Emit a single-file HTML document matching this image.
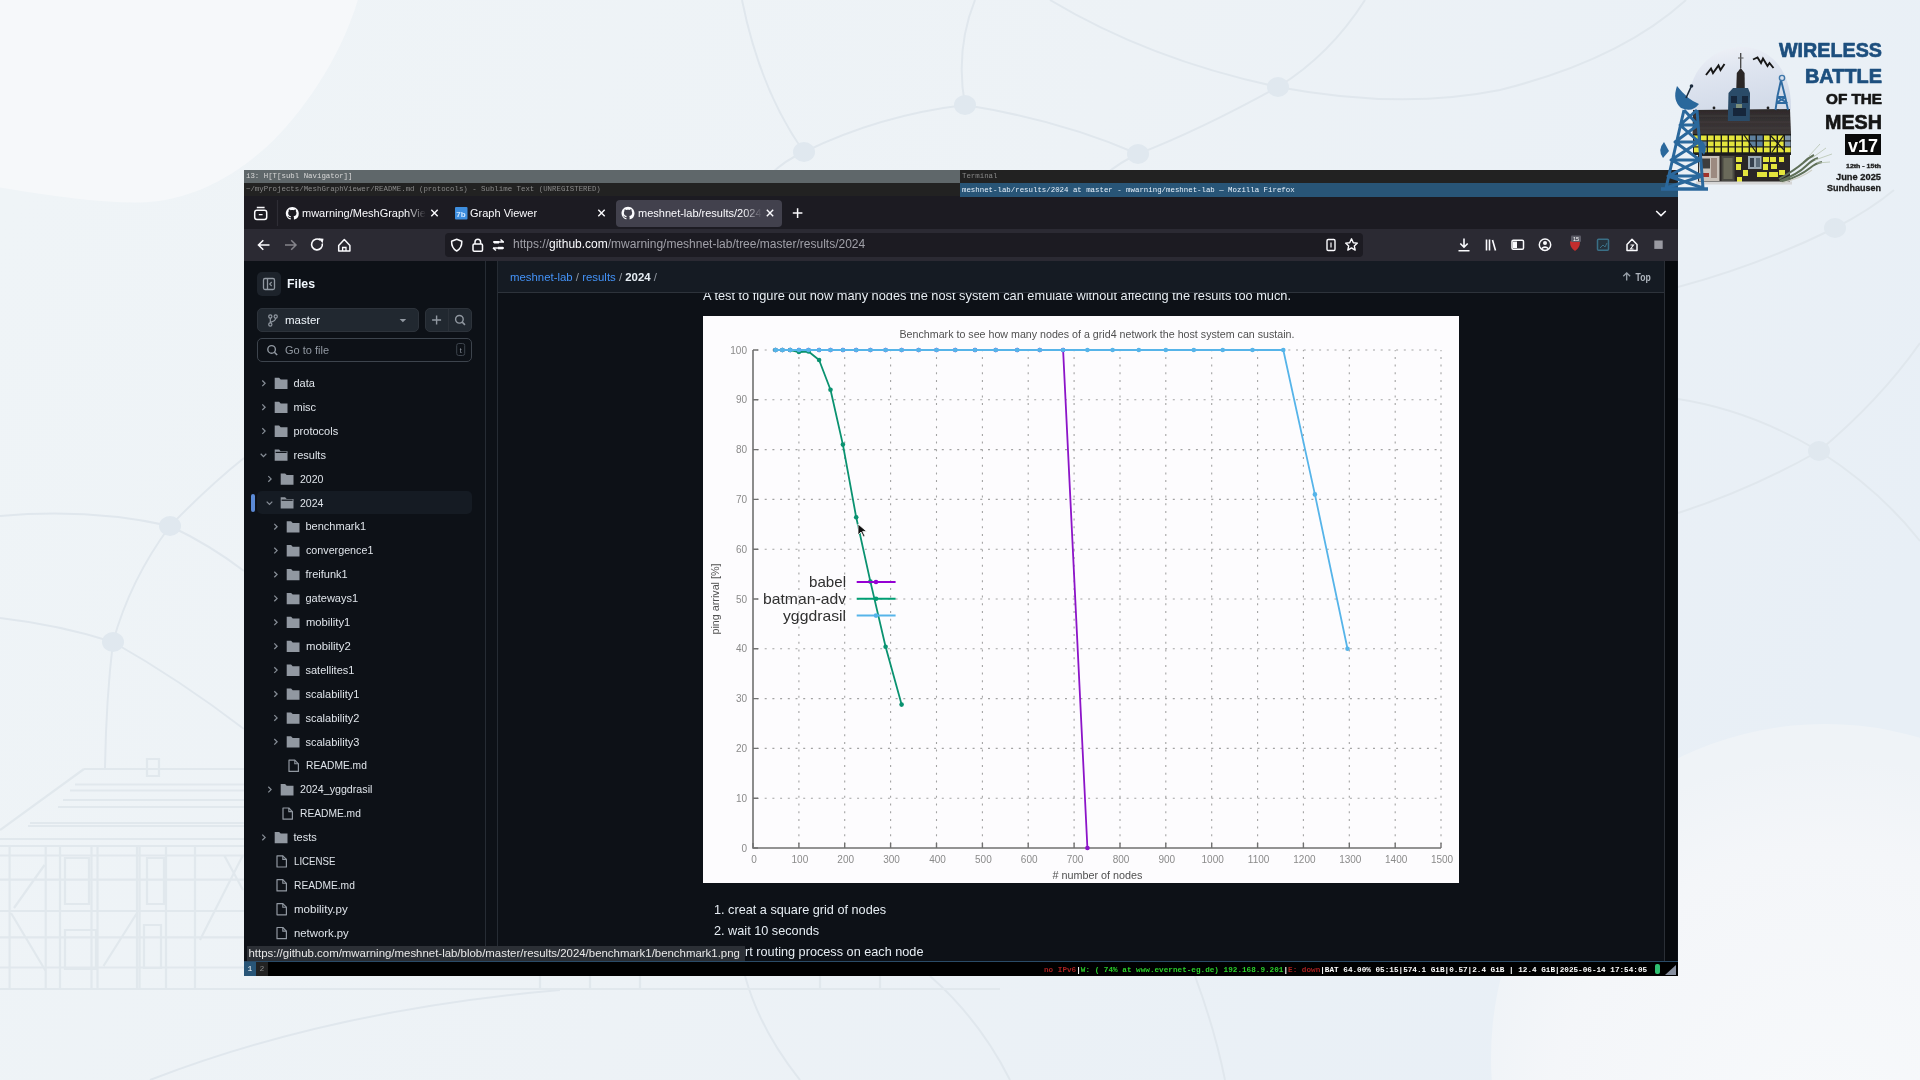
<!DOCTYPE html><html><head><meta charset="utf-8"><title>meshnet-lab</title><style>
*{margin:0;padding:0;box-sizing:border-box}
html,body{width:1920px;height:1080px;overflow:hidden}
body{position:relative;font-family:"Liberation Sans",sans-serif;background:#edf2f6}
.a{position:absolute}
.mono{font-family:"Liberation Mono",monospace}
.t{white-space:nowrap}
</style></head><body><div style="position:absolute;left:0;top:0;width:1920px;height:1080px;overflow:hidden;filter:blur(0.5px)"><svg width="1920" height="1080" viewBox="0 0 1920 1080" style="position:absolute;left:0;top:0"><defs><linearGradient id="bgg" x1="0" y1="0.2" x2="1" y2="0.5"><stop offset="0" stop-color="#eff4f7"/><stop offset="0.5" stop-color="#edf2f6"/><stop offset="1" stop-color="#e8eff6"/></linearGradient></defs><rect width="1920" height="1080" fill="url(#bgg)"/><path d="M0 187.5 C50 196 100 203 140 202.5 C190 201 232 178 266.7 146.7 C300 116 340 60 357.8 0 L0 0 Z" fill="#f6f8fa"/><radialGradient id="brc" cx="0.5" cy="0.6" r="0.55"><stop offset="0" stop-color="#f7f9fb"/><stop offset="0.75" stop-color="#f4f6f9"/><stop offset="1" stop-color="#eff3f7"/></radialGradient><circle cx="1825" cy="1058" r="334" fill="url(#brc)"/><path d="M742 0 Q760 90 804 152 M804 152 Q785 160 770 175 M975 0 Q955 50 965 105 M804 152 Q880 115 965 105 M965 105 Q1060 120 1138 154 M1138 154 Q1120 162 1105 175 M1050 0 Q1150 60 1278 87 M1365 0 Q1330 55 1278 87 M1278 87 Q1400 110 1500 90 Q1620 60 1686 0 M1278 87 Q1200 130 1138 154 M0 516 Q90 508 170 526 M170 526 Q210 485 244 458 M170 526 Q210 545 244 571 M170 526 Q130 580 113 642 M0 618 Q60 625 113 642 M113 642 Q180 680 244 729 M113 642 Q106 700 105 769 M1678 287 Q1760 265 1835 228 Q1870 210 1894 190 M1678 399 Q1750 410 1819 451 M1819 451 Q1750 490 1678 513 M1819 451 Q1880 400 1920 343 M1819 451 Q1880 490 1920 541 M150 1080 Q330 1010 560 990 M745 976 Q760 1030 800 1080 M930 976 Q980 1020 1010 1080 M1195 976 Q1215 1030 1225 1080" stroke="#e0e7ed" stroke-width="2" fill="none"/><ellipse cx="965" cy="105" rx="11" ry="10" fill="#e0e8ef"/><ellipse cx="1278" cy="87" rx="11" ry="10" fill="#e0e8ef"/><ellipse cx="804" cy="152" rx="11" ry="10" fill="#e0e8ef"/><ellipse cx="1138" cy="154" rx="11" ry="10" fill="#e0e8ef"/><ellipse cx="170" cy="526" rx="11" ry="10" fill="#e0e8ef"/><ellipse cx="113" cy="642" rx="11" ry="10" fill="#e0e8ef"/><ellipse cx="1835" cy="228" rx="11" ry="10" fill="#e0e8ef"/><ellipse cx="1819" cy="451" rx="11" ry="10" fill="#e0e8ef"/><path d="M84 769 H560 M84 769 L0 830 M75 784.5 H560 M70 790.5 H560 M63 800 H560 M58 807 H560 M30 823 H560 M28 826 H560 M0 839 H560 M0 846 H560 M0 855.5 H560 M0 879.6 H560 M0 911 H560 M0 937.4 H560 M0 967.5 H560 M0 989 H1000 M9.6 846 V989 M45.7 846 V989 M60 846 V989 M91.5 846 V989 M97.5 846 V989 M137 846 V989 M139.6 846 V989 M166 846 V989 M195 846 V989 M14 908 L44.5 865 M11 913 L45.7 971 M103.5 966 L137 913 M200 940 L243 855 M224 855 L243 890 M65 858 H89 V904 H65 Z M147 858 H164 V904 H147 Z M65 930 H96 V969 H65 Z M144 925 H161 V968 H144 Z M147 759 H159 V776 H147 Z M540 976 V989 M590 976 V989 M640 976 V989 M820 976 V989 M880 976 V989" stroke="#e1e8ed" stroke-width="2.2" fill="none"/></svg><div class="a" style="left:244px;top:170px;width:1434px;height:806px;background:#0d1117"></div><div class="a" style="left:244px;top:196px;width:1434px;height:33px;background:#1c1b22"></div><div class="a mono t" id="i3a" style="left:244px;top:170px;width:716px;height:13px;background:#5f676a;color:#d8d8d8;font-size:7.4px;line-height:13px;padding-left:2px">i3: H[T[subl Navigator]]</div><div class="a mono t" style="left:960px;top:170px;width:718px;height:13px;background:#222;color:#888;font-size:7.4px;line-height:13px;padding-left:2px">Terminal</div><div class="a mono t" id="i3b" style="left:244px;top:183px;width:716px;height:13px;background:#222;color:#8a8a8a;font-size:7.4px;line-height:13px;padding-left:2px">~/myProjects/MeshGraphViewer/README.md (protocols) - Sublime Text (UNREGISTERED)</div><div class="a mono t" id="i3c" style="left:960px;top:183px;width:718px;height:14px;background:#285577;color:#e8f2fc;font-size:7.4px;line-height:14px;padding-left:2px">meshnet-lab/results/2024 at master - mwarning/meshnet-lab — Mozilla Firefox</div><div class="a" style="left:616px;top:200px;width:166px;height:27px;background:#42414d;border-radius:4px"></div><div class="a t" id="tab2" style="left:470px;top:206px;font-size:11px;line-height:14px;color:#fbfbfe">Graph Viewer</div><div class="a t" id="tab1" style="left:302px;top:206px;width:124px;overflow:hidden;font-size:11px;line-height:14px;color:#fbfbfe;-webkit-mask-image:linear-gradient(90deg,#000 85%,transparent)">mwarning/MeshGraphViewer</div><div class="a t" id="tab3" style="left:638px;top:206px;width:124px;overflow:hidden;font-size:11px;line-height:14px;color:#fbfbfe;-webkit-mask-image:linear-gradient(90deg,#000 85%,transparent)">meshnet-lab/results/2024</div><div class="a" style="left:244px;top:229px;width:1434px;height:32px;background:#2b2a33"></div><div class="a" style="left:445px;top:233px;width:918px;height:24px;background:#1c1b22;border-radius:4px"></div><div class="a t" id="url" style="left:513px;top:237px;font-size:12px;line-height:15px;color:#a0a0a8">https://<span style="color:#fbfbfe">github.com</span>/mwarning/meshnet-lab/tree/master/results/2024</div><svg width="1920" height="270" viewBox="0 0 1920 270" style="position:absolute;left:0;top:0"><rect x="254.7" y="210.2" width="12" height="9.3" rx="2.2" stroke="#fbfbfe" stroke-width="1.5" fill="none"/><path d="M256.8 207.5 h7.8 M258.8 214.6 h3.8" stroke="#fbfbfe" stroke-width="1.4"/><path d="M277.5 200 V226" stroke="#2e2d35" stroke-width="1.2"/><path transform="translate(285.80 206.90) scale(0.8125)" d="M8 0C3.58 0 0 3.58 0 8c0 3.54 2.29 6.53 5.47 7.59.4.07.55-.17.55-.38 0-.19-.01-.82-.01-1.49-2.01.37-2.53-.49-2.69-.94-.09-.23-.48-.94-.82-1.13-.28-.15-.68-.52-.01-.53.63-.01 1.08.58 1.23.82.72 1.21 1.87.87 2.33.66.07-.52.28-.87.51-1.07-1.78-.2-3.64-.89-3.64-3.95 0-.87.31-1.59.82-2.15-.08-.2-.36-1.02.08-2.12 0 0 .67-.21 2.2.82.64-.18 1.32-.27 2-.27.68 0 1.36.09 2 .27 1.53-1.04 2.2-.82 2.2-.82.44 1.1.16 1.92.08 2.12.51.56.82 1.27.82 2.15 0 3.07-1.87 3.75-3.65 3.95.29.25.54.73.54 1.48 0 1.07-.01 1.93-.01 2.2 0 .21.15.46.55.38A8.013 8.013 0 0016 8c0-4.42-3.58-8-8-8z" fill="#fbfbfe"/><path transform="translate(621.50 206.70) scale(0.8125)" d="M8 0C3.58 0 0 3.58 0 8c0 3.54 2.29 6.53 5.47 7.59.4.07.55-.17.55-.38 0-.19-.01-.82-.01-1.49-2.01.37-2.53-.49-2.69-.94-.09-.23-.48-.94-.82-1.13-.28-.15-.68-.52-.01-.53.63-.01 1.08.58 1.23.82.72 1.21 1.87.87 2.33.66.07-.52.28-.87.51-1.07-1.78-.2-3.64-.89-3.64-3.95 0-.87.31-1.59.82-2.15-.08-.2-.36-1.02.08-2.12 0 0 .67-.21 2.2.82.64-.18 1.32-.27 2-.27.68 0 1.36.09 2 .27 1.53-1.04 2.2-.82 2.2-.82.44 1.1.16 1.92.08 2.12.51.56.82 1.27.82 2.15 0 3.07-1.87 3.75-3.65 3.95.29.25.54.73.54 1.48 0 1.07-.01 1.93-.01 2.2 0 .21.15.46.55.38A8.013 8.013 0 0016 8c0-4.42-3.58-8-8-8z" fill="#fbfbfe"/><rect x="455" y="207" width="12.5" height="12.5" rx="1" fill="#3e8ede"/><text x="461" y="217" font-family="Liberation Sans, sans-serif" font-size="8" font-weight="bold" fill="#cfe6ff" text-anchor="middle">7b</text><path d="M431.3 209.8 l6.4 6.4 M437.7 209.8 l-6.4 6.4" stroke="#fbfbfe" stroke-width="1.4"/><path d="M598.3 209.8 l6.4 6.4 M604.7 209.8 l-6.4 6.4" stroke="#fbfbfe" stroke-width="1.4"/><path d="M766.8 209.8 l6.4 6.4 M773.2 209.8 l-6.4 6.4" stroke="#fbfbfe" stroke-width="1.4"/><path d="M797.6 208.3 v9.6 M792.8 213.1 h9.6" stroke="#fbfbfe" stroke-width="1.5"/><path d="M1656.2 211 l4.8 4.6 l4.8 -4.6" stroke="#fbfbfe" stroke-width="1.5" fill="none"/><path d="M269.5 245 H258.5 M263.3 240.2 L258.5 245 L263.3 249.8" stroke="#fbfbfe" stroke-width="1.6" fill="none"/><path d="M285 245 H296 M291.2 240.2 L296 245 L291.2 249.8" stroke="#85848b" stroke-width="1.5" fill="none"/><path d="M322.3 243.5 A5.4 5.4 0 1 1 320.3 240.2" stroke="#fbfbfe" stroke-width="1.6" fill="none"/><path d="M318.5 238.2 L323.5 238.8 L322.6 243.2 Z" fill="#fbfbfe"/><path d="M338.7 245.5 L344.3 239.5 L349.9 245.5 V251 H338.7 Z" stroke="#fbfbfe" stroke-width="1.5" fill="none" stroke-linejoin="round"/><path d="M342.6 251 v-3.5 h3.4 v3.5" stroke="#fbfbfe" stroke-width="1.3" fill="none"/><path d="M456.7 239.3 L461.8 241.2 Q462 248 456.7 251 Q451.4 248 451.6 241.2 Z" stroke="#fbfbfe" stroke-width="1.5" fill="none" stroke-linejoin="round"/><rect x="473" y="244" width="9.5" height="7.2" rx="1.2" stroke="#fbfbfe" stroke-width="1.5" fill="none"/><path d="M475 244 v-2 a2.8 2.8 0 0 1 5.6 0 v2" stroke="#fbfbfe" stroke-width="1.5" fill="none"/><path d="M493 242 h11 M500.5 239.5 l3 2.5 M493 248 h11 M496 250.5 l-3 -2.5" stroke="#fbfbfe" stroke-width="1.5" fill="none"/><rect x="494" y="241" width="5" height="2.5" fill="#fbfbfe"/><rect x="498" y="246.8" width="5" height="2.5" fill="#fbfbfe"/><rect x="1327" y="239.5" width="8" height="11" rx="1.2" stroke="#fbfbfe" stroke-width="1.4" fill="none"/><path d="M1331 242.5 v5" stroke="#fbfbfe" stroke-width="1.2"/><path d="M1351.5 238.8 L1353.3 242.7 L1357.4 243.1 L1354.3 245.9 L1355.2 250.1 L1351.5 247.9 L1347.8 250.1 L1348.7 245.9 L1345.6 243.1 L1349.7 242.7 Z" stroke="#fbfbfe" stroke-width="1.4" fill="none" stroke-linejoin="round"/><path d="M1464 238.5 V247 M1460.3 243.5 L1464 247.2 L1467.7 243.5 M1458.5 250.8 H1469.5" stroke="#fbfbfe" stroke-width="1.6" fill="none"/><path d="M1486.5 239.5 V250.5 M1489.5 239.5 V250.5 M1492.5 240 L1495.5 250.5" stroke="#fbfbfe" stroke-width="1.6" fill="none"/><rect x="1512" y="240.2" width="11.5" height="9" rx="1.3" stroke="#fbfbfe" stroke-width="1.5" fill="none"/><rect x="1513" y="241.5" width="4" height="6.5" fill="#fbfbfe"/><circle cx="1545" cy="244.8" r="5.7" stroke="#fbfbfe" stroke-width="1.5" fill="none"/><circle cx="1545" cy="243" r="2" fill="#fbfbfe"/><path d="M1541.5 248.7 Q1545 245.5 1548.5 248.7" stroke="#fbfbfe" stroke-width="1.5" fill="none"/><path d="M1570 241.5 L1575 239.5 L1580 241.5 Q1580 248 1575 251 Q1570 248 1570 241.5 Z" fill="#c22d2d"/><rect x="1571" y="235.5" width="10" height="6.5" rx="1" fill="#5b5b66"/><text x="1576" y="241" font-family="Liberation Sans, sans-serif" font-size="5.5" fill="#fff" text-anchor="middle">15</text><rect x="1597.5" y="239.3" width="11" height="11" rx="1" stroke="#3a6f86" stroke-width="1.5" fill="#25323c"/><path d="M1600 248 L1603 245 L1605 247 L1607 243" stroke="#3a6f86" stroke-width="1" fill="none"/><path d="M1627 244.5 L1632 239.3 L1637 244.5 V250.5 H1627 Z" stroke="#fbfbfe" stroke-width="1.5" fill="none" stroke-linejoin="round"/><path d="M1630.5 245 h3 l-3 4 h3" stroke="#fbfbfe" stroke-width="1.1" fill="none"/><rect x="1654.3" y="240.5" width="8.4" height="8.4" fill="#9a9aa2"/></svg><div class="a" style="left:485px;top:261px;width:1px;height:685px;background:#262c34"></div><div class="a" style="left:497px;top:261px;width:1px;height:685px;background:#262c34"></div><div class="a" style="left:498px;top:261px;width:1166px;height:32px;background:#151b23;border-bottom:1px solid #2d333b"></div><div class="a t" id="crumb" style="left:510px;top:270px;font-size:11.4px;line-height:15px;color:#e6edf3"><span style="color:#4493f8">meshnet-lab</span><span style="color:#9198a1"> / </span><span style="color:#4493f8">results</span><span style="color:#9198a1"> / </span><b>2024</b><span style="color:#9198a1"> /</span></div><svg class="a" style="left:1600px;top:262px" width="64" height="30"><path d="M26.7 18.6 V11 M23.3 14.2 L26.7 10.8 L30.1 14.2" stroke="#9aa2ab" stroke-width="1.3" fill="none"/><text x="35.6" y="18.6" font-family="Liberation Sans, sans-serif" font-weight="bold" font-size="10" fill="#aeb5bd" textLength="15.2" lengthAdjust="spacingAndGlyphs">Top</text></svg><div class="a" style="left:1665px;top:261px;width:12px;height:701px;background:#070a0e"></div><div class="a" style="left:1664px;top:261px;width:1px;height:701px;background:#2a2f36"></div><div class="a" style="left:498px;top:293px;width:1166px;height:22px;overflow:hidden"><div class="a t" id="desc" style="left:205px;top:-5px;font-size:12.8px;line-height:16px;color:#e6edf3">A test to figure out how many nodes the host system can emulate without affecting the results too much.</div></div><div class="a" style="left:703px;top:316px;width:756px;height:567px;background:#fdfcfe"><svg width="756" height="567" viewBox="0 0 756 567" style="position:absolute;left:0;top:0"><path d="M54.0 482.2H738.0 M54.0 432.4H738.0 M54.0 382.6H738.0 M54.0 332.8H738.0 M54.0 283.0H738.0 M54.0 233.2H738.0 M54.0 183.4H738.0 M54.0 133.6H738.0 M54.0 83.8H738.0 M54.0 34.0H738.0 M95.9 528.0V34.0 M141.7 528.0V34.0 M187.6 528.0V34.0 M233.5 528.0V34.0 M279.4 528.0V34.0 M325.2 528.0V34.0 M371.1 528.0V34.0 M417.0 528.0V34.0 M462.8 528.0V34.0 M508.7 528.0V34.0 M554.6 528.0V34.0 M600.4 528.0V34.0 M646.3 528.0V34.0 M692.2 528.0V34.0 M738.0 528.0V34.0" stroke="#a3a3a3" stroke-width="1.1" stroke-dasharray="2 5.7" fill="none"/><path d="M50.0 34.0V532.0H738.0" stroke="#707070" stroke-width="1.6" fill="none"/><path d="M50.0 532.0h5 M50.0 482.2h5 M50.0 432.4h5 M50.0 382.6h5 M50.0 332.8h5 M50.0 283.0h5 M50.0 233.2h5 M50.0 183.4h5 M50.0 133.6h5 M50.0 83.8h5 M50.0 34.0h5 M50.0 532.0v-5 M95.9 532.0v-5 M141.7 532.0v-5 M187.6 532.0v-5 M233.5 532.0v-5 M279.4 532.0v-5 M325.2 532.0v-5 M371.1 532.0v-5 M417.0 532.0v-5 M462.8 532.0v-5 M508.7 532.0v-5 M554.6 532.0v-5 M600.4 532.0v-5 M646.3 532.0v-5 M692.2 532.0v-5 M738.0 532.0v-5" stroke="#707070" stroke-width="1.4" fill="none"/><g font-family="Liberation Sans, sans-serif" font-size="10" fill="#8a8a8a"><text x="44.0" y="535.6" text-anchor="end">0</text><text x="44.0" y="485.8" text-anchor="end">10</text><text x="44.0" y="436.0" text-anchor="end">20</text><text x="44.0" y="386.2" text-anchor="end">30</text><text x="44.0" y="336.4" text-anchor="end">40</text><text x="44.0" y="286.6" text-anchor="end">50</text><text x="44.0" y="236.8" text-anchor="end">60</text><text x="44.0" y="187.0" text-anchor="end">70</text><text x="44.0" y="137.2" text-anchor="end">80</text><text x="44.0" y="87.4" text-anchor="end">90</text><text x="44.0" y="37.6" text-anchor="end">100</text><text x="51.0" y="546.5" text-anchor="middle">0</text><text x="96.9" y="546.5" text-anchor="middle">100</text><text x="142.7" y="546.5" text-anchor="middle">200</text><text x="188.6" y="546.5" text-anchor="middle">300</text><text x="234.5" y="546.5" text-anchor="middle">400</text><text x="280.4" y="546.5" text-anchor="middle">500</text><text x="326.2" y="546.5" text-anchor="middle">600</text><text x="372.1" y="546.5" text-anchor="middle">700</text><text x="418.0" y="546.5" text-anchor="middle">800</text><text x="463.8" y="546.5" text-anchor="middle">900</text><text x="509.7" y="546.5" text-anchor="middle">1000</text><text x="555.6" y="546.5" text-anchor="middle">1100</text><text x="601.4" y="546.5" text-anchor="middle">1200</text><text x="647.3" y="546.5" text-anchor="middle">1300</text><text x="693.2" y="546.5" text-anchor="middle">1400</text><text x="739.0" y="546.5" text-anchor="middle">1500</text></g><text x="394" y="21.5" text-anchor="middle" font-family="Liberation Sans, sans-serif" font-size="10.6" fill="#505050" textLength="395" lengthAdjust="spacingAndGlyphs">Benchmark to see how many nodes of a grid4 network the host system can sustain.</text><text x="394.5" y="563" text-anchor="middle" font-family="Liberation Sans, sans-serif" font-size="10.6" fill="#505050" textLength="90" lengthAdjust="spacingAndGlyphs"># number of nodes</text><text transform="translate(15.5 283) rotate(-90)" text-anchor="middle" font-family="Liberation Sans, sans-serif" font-size="10.4" fill="#505050" textLength="71" lengthAdjust="spacingAndGlyphs">ping arrival [%]</text><path d="M72.5 34.0 L79.4 34.0 L87.2 34.0 L95.9 34.0 L105.5 34.0 L116.1 34.0 L127.5 34.0 L139.9 34.0 L153.2 34.0 L167.4 34.0 L182.6 34.0 L198.6 34.0 L215.6 34.0 L233.5 34.0 L252.3 34.0 L272.0 34.0 L292.7 34.0 L314.2 34.0 L336.7 34.0 L360.1 34.0 L384.4 532.0" stroke="#8c14c8" stroke-width="1.8" fill="none" stroke-linejoin="round"/><circle cx="72.5" cy="34.0" r="2.3" fill="#8c14c8"/><circle cx="79.4" cy="34.0" r="2.3" fill="#8c14c8"/><circle cx="87.2" cy="34.0" r="2.3" fill="#8c14c8"/><circle cx="95.9" cy="34.0" r="2.3" fill="#8c14c8"/><circle cx="105.5" cy="34.0" r="2.3" fill="#8c14c8"/><circle cx="116.1" cy="34.0" r="2.3" fill="#8c14c8"/><circle cx="127.5" cy="34.0" r="2.3" fill="#8c14c8"/><circle cx="139.9" cy="34.0" r="2.3" fill="#8c14c8"/><circle cx="153.2" cy="34.0" r="2.3" fill="#8c14c8"/><circle cx="167.4" cy="34.0" r="2.3" fill="#8c14c8"/><circle cx="182.6" cy="34.0" r="2.3" fill="#8c14c8"/><circle cx="198.6" cy="34.0" r="2.3" fill="#8c14c8"/><circle cx="215.6" cy="34.0" r="2.3" fill="#8c14c8"/><circle cx="233.5" cy="34.0" r="2.3" fill="#8c14c8"/><circle cx="252.3" cy="34.0" r="2.3" fill="#8c14c8"/><circle cx="272.0" cy="34.0" r="2.3" fill="#8c14c8"/><circle cx="292.7" cy="34.0" r="2.3" fill="#8c14c8"/><circle cx="314.2" cy="34.0" r="2.3" fill="#8c14c8"/><circle cx="336.7" cy="34.0" r="2.3" fill="#8c14c8"/><circle cx="360.1" cy="34.0" r="2.3" fill="#8c14c8"/><circle cx="384.4" cy="532.0" r="2.3" fill="#8c14c8"/><path d="M72.5 34.0 L79.4 34.0 L87.2 34.0 L95.9 36.0 L105.5 35.5 L116.1 44.0 L127.5 73.8 L139.9 128.6 L153.2 201.3 L167.4 265.6 L182.6 330.8 L198.6 388.6" stroke="#0a9270" stroke-width="1.8" fill="none" stroke-linejoin="round"/><circle cx="72.5" cy="34.0" r="2.3" fill="#0a9270"/><circle cx="79.4" cy="34.0" r="2.3" fill="#0a9270"/><circle cx="87.2" cy="34.0" r="2.3" fill="#0a9270"/><circle cx="95.9" cy="36.0" r="2.3" fill="#0a9270"/><circle cx="105.5" cy="35.5" r="2.3" fill="#0a9270"/><circle cx="116.1" cy="44.0" r="2.3" fill="#0a9270"/><circle cx="127.5" cy="73.8" r="2.3" fill="#0a9270"/><circle cx="139.9" cy="128.6" r="2.3" fill="#0a9270"/><circle cx="153.2" cy="201.3" r="2.3" fill="#0a9270"/><circle cx="167.4" cy="265.6" r="2.3" fill="#0a9270"/><circle cx="182.6" cy="330.8" r="2.3" fill="#0a9270"/><circle cx="198.6" cy="388.6" r="2.3" fill="#0a9270"/><path d="M72.5 34.0 L79.4 34.0 L87.2 34.0 L95.9 34.0 L105.5 34.0 L116.1 34.0 L127.5 34.0 L139.9 34.0 L153.2 34.0 L167.4 34.0 L182.6 34.0 L198.6 34.0 L215.6 34.0 L233.5 34.0 L252.3 34.0 L272.0 34.0 L292.7 34.0 L314.2 34.0 L336.7 34.0 L360.1 34.0 L384.4 34.0 L409.6 34.0 L435.8 34.0 L462.8 34.0 L490.8 34.0 L519.7 34.0 L549.5 34.0 L580.3 34.0 L611.9 178.4 L644.5 332.8" stroke="#56b4e9" stroke-width="1.8" fill="none" stroke-linejoin="round"/><circle cx="72.5" cy="34.0" r="2.3" fill="#56b4e9"/><circle cx="79.4" cy="34.0" r="2.3" fill="#56b4e9"/><circle cx="87.2" cy="34.0" r="2.3" fill="#56b4e9"/><circle cx="95.9" cy="34.0" r="2.3" fill="#56b4e9"/><circle cx="105.5" cy="34.0" r="2.3" fill="#56b4e9"/><circle cx="116.1" cy="34.0" r="2.3" fill="#56b4e9"/><circle cx="127.5" cy="34.0" r="2.3" fill="#56b4e9"/><circle cx="139.9" cy="34.0" r="2.3" fill="#56b4e9"/><circle cx="153.2" cy="34.0" r="2.3" fill="#56b4e9"/><circle cx="167.4" cy="34.0" r="2.3" fill="#56b4e9"/><circle cx="182.6" cy="34.0" r="2.3" fill="#56b4e9"/><circle cx="198.6" cy="34.0" r="2.3" fill="#56b4e9"/><circle cx="215.6" cy="34.0" r="2.3" fill="#56b4e9"/><circle cx="233.5" cy="34.0" r="2.3" fill="#56b4e9"/><circle cx="252.3" cy="34.0" r="2.3" fill="#56b4e9"/><circle cx="272.0" cy="34.0" r="2.3" fill="#56b4e9"/><circle cx="292.7" cy="34.0" r="2.3" fill="#56b4e9"/><circle cx="314.2" cy="34.0" r="2.3" fill="#56b4e9"/><circle cx="336.7" cy="34.0" r="2.3" fill="#56b4e9"/><circle cx="360.1" cy="34.0" r="2.3" fill="#56b4e9"/><circle cx="384.4" cy="34.0" r="2.3" fill="#56b4e9"/><circle cx="409.6" cy="34.0" r="2.3" fill="#56b4e9"/><circle cx="435.8" cy="34.0" r="2.3" fill="#56b4e9"/><circle cx="462.8" cy="34.0" r="2.3" fill="#56b4e9"/><circle cx="490.8" cy="34.0" r="2.3" fill="#56b4e9"/><circle cx="519.7" cy="34.0" r="2.3" fill="#56b4e9"/><circle cx="549.5" cy="34.0" r="2.3" fill="#56b4e9"/><circle cx="580.3" cy="34.0" r="2.3" fill="#56b4e9"/><circle cx="611.9" cy="178.4" r="2.3" fill="#56b4e9"/><circle cx="644.5" cy="332.8" r="2.3" fill="#56b4e9"/><g font-family="Liberation Sans, sans-serif" font-size="15" fill="#303030"><text x="143" y="271.0" text-anchor="end" textLength="37" lengthAdjust="spacingAndGlyphs">babel</text><path d="M153.7 266.0H192.6" stroke="#9400d3" stroke-width="2"/><circle cx="173" cy="266.0" r="2.3" fill="#9400d3"/><text x="143" y="287.8" text-anchor="end" textLength="83" lengthAdjust="spacingAndGlyphs">batman-adv</text><path d="M153.7 282.8H192.6" stroke="#009e73" stroke-width="2"/><circle cx="173" cy="282.8" r="2.3" fill="#009e73"/><text x="143" y="304.6" text-anchor="end" textLength="63" lengthAdjust="spacingAndGlyphs">yggdrasil</text><path d="M153.7 299.6H192.6" stroke="#56b4e9" stroke-width="2"/><circle cx="173" cy="299.6" r="2.3" fill="#56b4e9"/></g><path d="M155 208 l0 11 l3 -3 l2.5 5 l1.6 -0.8 l-2.4 -4.8 l4 0 z" fill="#111" stroke="#fff" stroke-width="0.8"/></svg></div><div class="a t" id="li1" style="left:714px;top:901.5px;font-size:12.7px;line-height:17px;color:#e6edf3">1. creat a square grid of nodes</div><div class="a t" id="li2" style="left:714px;top:922.5px;font-size:12.7px;line-height:17px;color:#e6edf3">2. wait 10 seconds</div><div class="a t" id="li3" style="left:714px;top:943.5px;font-size:12.7px;line-height:17px;color:#e6edf3">3. start routing process on each node</div><div class="a" style="left:257px;top:272px;width:24px;height:24px;background:#1d232b;border-radius:5px"></div><div class="a t" id="files" style="left:287px;top:277px;font-size:12.3px;line-height:15px;color:#f0f6fc;font-weight:bold">Files</div><div class="a" style="left:257px;top:308px;width:162px;height:24px;background:#212830;border:1px solid #2d333b;border-radius:5px"></div><div class="a t" id="master" style="left:285px;top:313px;font-size:11.5px;line-height:14px;color:#f0f6fc">master</div><div class="a" style="left:425px;top:308px;width:47px;height:24px;background:#212830;border:1px solid #2d333b;border-radius:5px"></div><div class="a" style="left:257px;top:338px;width:215px;height:24px;background:#0d1117;border:1px solid #3d444d;border-radius:5px"></div><div class="a t" id="gotofile" style="left:285px;top:343px;font-size:11px;line-height:14px;color:#9198a1">Go to file</div><div class="a" style="left:257px;top:491px;width:215px;height:23px;background:#151b23;border-radius:5px"></div><div class="a" style="left:251px;top:494px;width:4px;height:18px;background:#5b8ad6;border-radius:2px"></div><svg width="500" height="980" viewBox="0 0 500 980" style="position:absolute;left:0;top:0"><rect x="263.5" y="278.5" width="11" height="11" rx="1.5" stroke="#9198a1" stroke-width="1.3" fill="none"/><path d="M267.5 279 v10" stroke="#9198a1" stroke-width="1.3"/><path d="M271.7 282 l-2 2 l2 2" stroke="#9198a1" stroke-width="1.1" fill="none"/><circle cx="270.3" cy="316.5" r="1.6" stroke="#9198a1" stroke-width="1.2" fill="none"/><circle cx="270.3" cy="324.5" r="1.6" stroke="#9198a1" stroke-width="1.2" fill="none"/><circle cx="275.7" cy="316.5" r="1.6" stroke="#9198a1" stroke-width="1.2" fill="none"/><path d="M270.3 318 v5 M275.7 318 q0 3 -5.4 4.3" stroke="#9198a1" stroke-width="1.2" fill="none"/><path d="M399.6 319 h6.6 l-3.3 3.3 z" fill="#9198a1"/><path d="M436.6 315.5 v9 M432.1 320 h9" stroke="#9198a1" stroke-width="1.4"/><path d="M448.6 309 V331" stroke="#2d333b" stroke-width="1"/><circle cx="459.4" cy="319.3" r="3.8" stroke="#9198a1" stroke-width="1.4" fill="none"/><path d="M462.2 322.1 l2.8 2.8" stroke="#9198a1" stroke-width="1.5"/><circle cx="271.6" cy="349.4" r="3.8" stroke="#9198a1" stroke-width="1.4" fill="none"/><path d="M274.4 352.2 l2.8 2.8" stroke="#9198a1" stroke-width="1.5"/><rect x="456.7" y="343.5" width="8" height="12" rx="2" stroke="#3d444d" stroke-width="1" fill="none"/><text x="460.7" y="352.5" font-family="Liberation Sans, sans-serif" font-size="7" fill="#9198a1" text-anchor="middle">t</text><path d="M262.3 380.5 l2.8 2.8 l-2.8 2.8" stroke="#868d96" stroke-width="1.25" fill="none"/><path d="M274.7 377.8 h4.4 l1.6 1.7 h6.8 v9.6 h-12.8 z" fill="#9198a1"/><path d="M262.3 404.4 l2.8 2.8 l-2.8 2.8" stroke="#868d96" stroke-width="1.25" fill="none"/><path d="M274.7 401.7 h4.4 l1.6 1.7 h6.8 v9.6 h-12.8 z" fill="#9198a1"/><path d="M262.3 428.3 l2.8 2.8 l-2.8 2.8" stroke="#868d96" stroke-width="1.25" fill="none"/><path d="M274.7 425.6 h4.4 l1.6 1.7 h6.8 v9.6 h-12.8 z" fill="#9198a1"/><path d="M260.7 453.8 l2.8 2.8 l2.8 -2.8" stroke="#868d96" stroke-width="1.25" fill="none"/><path d="M274.7 449.5 h4.4 l1.6 1.7 h6.8 v9.6 h-12.8 z" fill="#9198a1"/><path d="M275.6 452.4 h11" stroke="#0d1117" stroke-width="1.2"/><path d="M268.3 476.1 l2.8 2.8 l-2.8 2.8" stroke="#868d96" stroke-width="1.25" fill="none"/><path d="M280.7 473.4 h4.4 l1.6 1.7 h6.8 v9.6 h-12.8 z" fill="#9198a1"/><path d="M266.7 501.6 l2.8 2.8 l2.8 -2.8" stroke="#868d96" stroke-width="1.25" fill="none"/><path d="M280.7 497.3 h4.4 l1.6 1.7 h6.8 v9.6 h-12.8 z" fill="#9198a1"/><path d="M281.6 500.2 h11" stroke="#0d1117" stroke-width="1.2"/><path d="M274.3 523.9 l2.8 2.8 l-2.8 2.8" stroke="#868d96" stroke-width="1.25" fill="none"/><path d="M286.7 521.2 h4.4 l1.6 1.7 h6.8 v9.6 h-12.8 z" fill="#9198a1"/><path d="M274.3 547.8 l2.8 2.8 l-2.8 2.8" stroke="#868d96" stroke-width="1.25" fill="none"/><path d="M286.7 545.1 h4.4 l1.6 1.7 h6.8 v9.6 h-12.8 z" fill="#9198a1"/><path d="M274.3 571.7 l2.8 2.8 l-2.8 2.8" stroke="#868d96" stroke-width="1.25" fill="none"/><path d="M286.7 569.0 h4.4 l1.6 1.7 h6.8 v9.6 h-12.8 z" fill="#9198a1"/><path d="M274.3 595.6 l2.8 2.8 l-2.8 2.8" stroke="#868d96" stroke-width="1.25" fill="none"/><path d="M286.7 592.9 h4.4 l1.6 1.7 h6.8 v9.6 h-12.8 z" fill="#9198a1"/><path d="M274.3 619.5 l2.8 2.8 l-2.8 2.8" stroke="#868d96" stroke-width="1.25" fill="none"/><path d="M286.7 616.8 h4.4 l1.6 1.7 h6.8 v9.6 h-12.8 z" fill="#9198a1"/><path d="M274.3 643.4 l2.8 2.8 l-2.8 2.8" stroke="#868d96" stroke-width="1.25" fill="none"/><path d="M286.7 640.7 h4.4 l1.6 1.7 h6.8 v9.6 h-12.8 z" fill="#9198a1"/><path d="M274.3 667.3 l2.8 2.8 l-2.8 2.8" stroke="#868d96" stroke-width="1.25" fill="none"/><path d="M286.7 664.6 h4.4 l1.6 1.7 h6.8 v9.6 h-12.8 z" fill="#9198a1"/><path d="M274.3 691.2 l2.8 2.8 l-2.8 2.8" stroke="#868d96" stroke-width="1.25" fill="none"/><path d="M286.7 688.5 h4.4 l1.6 1.7 h6.8 v9.6 h-12.8 z" fill="#9198a1"/><path d="M274.3 715.1 l2.8 2.8 l-2.8 2.8" stroke="#868d96" stroke-width="1.25" fill="none"/><path d="M286.7 712.4 h4.4 l1.6 1.7 h6.8 v9.6 h-12.8 z" fill="#9198a1"/><path d="M274.3 739.0 l2.8 2.8 l-2.8 2.8" stroke="#868d96" stroke-width="1.25" fill="none"/><path d="M286.7 736.3 h4.4 l1.6 1.7 h6.8 v9.6 h-12.8 z" fill="#9198a1"/><path d="M289.0 760.2 h5.8 l3.6 3.6 v7.6 h-9.4 z" stroke="#9198a1" stroke-width="1.2" fill="none" stroke-linejoin="round"/><path d="M294.8 760.2 v3.6 h3.6" stroke="#9198a1" stroke-width="1.1" fill="none"/><path d="M268.3 786.8 l2.8 2.8 l-2.8 2.8" stroke="#868d96" stroke-width="1.25" fill="none"/><path d="M280.7 784.1 h4.4 l1.6 1.7 h6.8 v9.6 h-12.8 z" fill="#9198a1"/><path d="M283.0 808.0 h5.8 l3.6 3.6 v7.6 h-9.4 z" stroke="#9198a1" stroke-width="1.2" fill="none" stroke-linejoin="round"/><path d="M288.8 808.0 v3.6 h3.6" stroke="#9198a1" stroke-width="1.1" fill="none"/><path d="M262.3 834.6 l2.8 2.8 l-2.8 2.8" stroke="#868d96" stroke-width="1.25" fill="none"/><path d="M274.7 831.9 h4.4 l1.6 1.7 h6.8 v9.6 h-12.8 z" fill="#9198a1"/><path d="M277.0 855.8 h5.8 l3.6 3.6 v7.6 h-9.4 z" stroke="#9198a1" stroke-width="1.2" fill="none" stroke-linejoin="round"/><path d="M282.8 855.8 v3.6 h3.6" stroke="#9198a1" stroke-width="1.1" fill="none"/><path d="M277.0 879.7 h5.8 l3.6 3.6 v7.6 h-9.4 z" stroke="#9198a1" stroke-width="1.2" fill="none" stroke-linejoin="round"/><path d="M282.8 879.7 v3.6 h3.6" stroke="#9198a1" stroke-width="1.1" fill="none"/><path d="M277.0 903.6 h5.8 l3.6 3.6 v7.6 h-9.4 z" stroke="#9198a1" stroke-width="1.2" fill="none" stroke-linejoin="round"/><path d="M282.8 903.6 v3.6 h3.6" stroke="#9198a1" stroke-width="1.1" fill="none"/><path d="M277.0 927.5 h5.8 l3.6 3.6 v7.6 h-9.4 z" stroke="#9198a1" stroke-width="1.2" fill="none" stroke-linejoin="round"/><path d="M282.8 927.5 v3.6 h3.6" stroke="#9198a1" stroke-width="1.1" fill="none"/></svg><div class="a t" id="tree0" style="left:293.5px;top:376.0px;font-size:11px;line-height:14px;color:#dfe4ea">data</div><div class="a t" id="tree1" style="left:293.5px;top:399.9px;font-size:11px;line-height:14px;color:#dfe4ea">misc</div><div class="a t" id="tree2" style="left:293.5px;top:423.8px;font-size:11px;line-height:14px;color:#dfe4ea">protocols</div><div class="a t" id="tree3" style="left:293.5px;top:447.7px;font-size:11px;line-height:14px;color:#dfe4ea">results</div><div class="a t" id="tree4" style="left:299.5px;top:471.6px;font-size:11px;line-height:14px;color:#dfe4ea;transform:scaleX(0.96);transform-origin:0 0">2020</div><div class="a t" id="tree5" style="left:299.5px;top:495.5px;font-size:11px;line-height:14px;color:#dfe4ea;transform:scaleX(0.96);transform-origin:0 0">2024</div><div class="a t" id="tree6" style="left:305.5px;top:519.4px;font-size:11px;line-height:14px;color:#dfe4ea">benchmark1</div><div class="a t" id="tree7" style="left:305.5px;top:543.3px;font-size:11px;line-height:14px;color:#dfe4ea;transform:scaleX(0.975);transform-origin:0 0">convergence1</div><div class="a t" id="tree8" style="left:305.5px;top:567.2px;font-size:11px;line-height:14px;color:#dfe4ea">freifunk1</div><div class="a t" id="tree9" style="left:305.5px;top:591.1px;font-size:11px;line-height:14px;color:#dfe4ea">gateways1</div><div class="a t" id="tree10" style="left:305.5px;top:615.0px;font-size:11px;line-height:14px;color:#dfe4ea;transform:scaleX(1.02);transform-origin:0 0">mobility1</div><div class="a t" id="tree11" style="left:305.5px;top:638.9px;font-size:11px;line-height:14px;color:#dfe4ea;transform:scaleX(1.03);transform-origin:0 0">mobility2</div><div class="a t" id="tree12" style="left:305.5px;top:662.8px;font-size:11px;line-height:14px;color:#dfe4ea">satellites1</div><div class="a t" id="tree13" style="left:305.5px;top:686.7px;font-size:11px;line-height:14px;color:#dfe4ea">scalability1</div><div class="a t" id="tree14" style="left:305.5px;top:710.6px;font-size:11px;line-height:14px;color:#dfe4ea">scalability2</div><div class="a t" id="tree15" style="left:305.5px;top:734.5px;font-size:11px;line-height:14px;color:#dfe4ea">scalability3</div><div class="a t" id="tree16" style="left:305.5px;top:758.4px;font-size:11px;line-height:14px;color:#dfe4ea;transform:scaleX(0.93);transform-origin:0 0">README.md</div><div class="a t" id="tree17" style="left:299.5px;top:782.3px;font-size:11px;line-height:14px;color:#dfe4ea;transform:scaleX(0.97);transform-origin:0 0">2024_yggdrasil</div><div class="a t" id="tree18" style="left:299.5px;top:806.2px;font-size:11px;line-height:14px;color:#dfe4ea;transform:scaleX(0.93);transform-origin:0 0">README.md</div><div class="a t" id="tree19" style="left:293.5px;top:830.1px;font-size:11px;line-height:14px;color:#dfe4ea">tests</div><div class="a t" id="tree20" style="left:293.5px;top:854.0px;font-size:11px;line-height:14px;color:#dfe4ea;transform:scaleX(0.88);transform-origin:0 0">LICENSE</div><div class="a t" id="tree21" style="left:293.5px;top:877.9px;font-size:11px;line-height:14px;color:#dfe4ea;transform:scaleX(0.93);transform-origin:0 0">README.md</div><div class="a t" id="tree22" style="left:293.5px;top:901.8px;font-size:11px;line-height:14px;color:#dfe4ea;transform:scaleX(1.05);transform-origin:0 0">mobility.py</div><div class="a t" id="tree23" style="left:293.5px;top:925.7px;font-size:11px;line-height:14px;color:#dfe4ea;transform:scaleX(1.03);transform-origin:0 0">network.py</div><div class="a" style="left:247px;top:946px;width:498px;height:15px;background:#2b2f35"></div><div class="a t" id="tip" style="left:248.5px;top:946px;font-size:11.43px;line-height:15px;color:#e8e8e8">https://github.com/mwarning/meshnet-lab/blob/master/results/2024/benchmark1/benchmark1.png</div><div class="a" style="left:244px;top:961px;width:1434px;height:1px;background:#2a4a66"></div><div class="a" style="left:244px;top:962px;width:1434px;height:14px;background:#000"></div><div class="a mono" style="left:244px;top:962px;width:12px;height:14px;background:#285577;color:#fff;font-size:8px;line-height:14px;text-align:center">1</div><div class="a mono" style="left:256px;top:962px;width:12px;height:14px;background:#222;color:#888;font-size:8px;line-height:14px;text-align:center">2</div><div class="a mono t" id="status" style="left:1044px;top:963px;font-size:7.68px;line-height:14px;color:#fff;font-weight:bold"><span style="color:#a82020">no IPv6</span>|<span style="color:#2ad02a">W: ( 74% at www.evernet-eg.de) 192.168.9.201</span>|<span style="color:#a82020">E: down</span>|BAT 64.00% 05:15|574.1 GiB|0.57|2.4 GiB | 12.4 GiB|2025-06-14 17:54:05</div><div class="a" style="left:1655px;top:964px;width:5px;height:10px;background:#2fbf71;border-radius:2px"></div><svg class="a" style="left:1664px;top:963px" width="14" height="13"><path d="M1 12 L12 2 V12 Z" fill="#8890a0"/></svg><svg width="1920" height="220" viewBox="0 0 1920 220" style="position:absolute;left:0;top:0"><defs><linearGradient id="sky" x1="0" y1="0" x2="0.3" y2="1"><stop offset="0" stop-color="#f1f3f8"/><stop offset="0.45" stop-color="#dfe5f0"/><stop offset="1" stop-color="#d3dbe9"/></linearGradient><linearGradient id="roof" x1="0" y1="0" x2="0" y2="1"><stop offset="0" stop-color="#2e2a2b"/><stop offset="1" stop-color="#3d3838"/></linearGradient><filter id="lb" x="-5%" y="-5%" width="110%" height="110%"><feGaussianBlur stdDeviation="0.45"/></filter></defs><g filter="url(#lb)"><path d="M1688 110 C1687 72 1710 48 1741 47 C1772 47 1792 72 1791 110 Z" fill="url(#sky)"/><path d="M1692.5 134 L1693 110 L1790 109 L1791 134 Z" fill="url(#roof)"/><path d="M1694 116 H1789 M1693 122 H1790 M1693 128 H1790" stroke="#4a4444" stroke-width="0.9" opacity="0.7"/><circle cx="1714" cy="108" r="1.4" fill="#222"/><circle cx="1768" cy="108" r="1.4" fill="#222"/><rect x="1693" y="134" width="98" height="21" fill="#1c1c1a"/><rect x="1694" y="135.5" width="5.6" height="4.8" fill="#e4e53e"/><rect x="1701" y="135.5" width="5.6" height="4.8" fill="#e4e53e"/><rect x="1708" y="135.5" width="5.6" height="4.8" fill="#e4e53e"/><rect x="1715" y="135.5" width="5.6" height="4.8" fill="#e4e53e"/><rect x="1722" y="135.5" width="5.6" height="4.8" fill="#e4e53e"/><rect x="1729" y="135.5" width="5.6" height="4.8" fill="#e4e53e"/><rect x="1736" y="135.5" width="5.6" height="4.8" fill="#e4e53e"/><rect x="1743" y="135.5" width="5.6" height="4.8" fill="#e4e53e"/><rect x="1750" y="135.5" width="5.6" height="4.8" fill="#5d7f9c"/><rect x="1757" y="135.5" width="5.6" height="4.8" fill="#5d7f9c"/><rect x="1764" y="135.5" width="5.6" height="4.8" fill="#e4e53e"/><rect x="1771" y="135.5" width="5.6" height="4.8" fill="#e4e53e"/><rect x="1778" y="135.5" width="5.6" height="4.8" fill="#e4e53e"/><rect x="1785" y="135.5" width="5.6" height="4.8" fill="#7e95a8"/><rect x="1694" y="141.5" width="5.6" height="4.8" fill="#e4e53e"/><rect x="1701" y="141.5" width="5.6" height="4.8" fill="#5d7f9c"/><rect x="1708" y="141.5" width="5.6" height="4.8" fill="#e4e53e"/><rect x="1715" y="141.5" width="5.6" height="4.8" fill="#e4e53e"/><rect x="1722" y="141.5" width="5.6" height="4.8" fill="#e4e53e"/><rect x="1729" y="141.5" width="5.6" height="4.8" fill="#e4e53e"/><rect x="1736" y="141.5" width="5.6" height="4.8" fill="#e4e53e"/><rect x="1743" y="141.5" width="5.6" height="4.8" fill="#e4e53e"/><rect x="1750" y="141.5" width="5.6" height="4.8" fill="#5d7f9c"/><rect x="1757" y="141.5" width="5.6" height="4.8" fill="#5d7f9c"/><rect x="1764" y="141.5" width="5.6" height="4.8" fill="#e4e53e"/><rect x="1771" y="141.5" width="5.6" height="4.8" fill="#e4e53e"/><rect x="1778" y="141.5" width="5.6" height="4.8" fill="#e4e53e"/><rect x="1785" y="141.5" width="5.6" height="4.8" fill="#7e95a8"/><rect x="1694" y="147.5" width="5.6" height="4.8" fill="#e4e53e"/><rect x="1701" y="147.5" width="5.6" height="4.8" fill="#e4e53e"/><rect x="1708" y="147.5" width="5.6" height="4.8" fill="#e4e53e"/><rect x="1715" y="147.5" width="5.6" height="4.8" fill="#e4e53e"/><rect x="1722" y="147.5" width="5.6" height="4.8" fill="#e4e53e"/><rect x="1729" y="147.5" width="5.6" height="4.8" fill="#e4e53e"/><rect x="1736" y="147.5" width="5.6" height="4.8" fill="#e4e53e"/><rect x="1743" y="147.5" width="5.6" height="4.8" fill="#e4e53e"/><rect x="1750" y="147.5" width="5.6" height="4.8" fill="#e4e53e"/><rect x="1757" y="147.5" width="5.6" height="4.8" fill="#e4e53e"/><rect x="1764" y="147.5" width="5.6" height="4.8" fill="#e4e53e"/><rect x="1771" y="147.5" width="5.6" height="4.8" fill="#e4e53e"/><rect x="1778" y="147.5" width="5.6" height="4.8" fill="#e4e53e"/><rect x="1785" y="147.5" width="5.6" height="4.8" fill="#e4e53e"/><path d="M1744 135 L1758 155 M1770 135 L1784 150 M1784 135 L1772 152" stroke="#1c1c1a" stroke-width="1.3"/><rect x="1698" y="155" width="92" height="27" fill="#2b2826"/><rect x="1699" y="156" width="20.5" height="25" fill="#c9c2ba"/><rect x="1702" y="158.5" width="8" height="10" fill="#3e3e3e"/><rect x="1711" y="158" width="6" height="20" fill="#9c8a80"/><rect x="1702" y="173" width="7" height="4" fill="#a0302c"/><rect x="1721.5" y="156" width="13" height="25" fill="#4a4a42"/><rect x="1723.5" y="158" width="9" height="21" fill="#6a6a5a"/><rect x="1736" y="157" width="6" height="5" fill="#e4e53e"/><rect x="1736" y="164" width="5" height="6" fill="#e4e53e"/><rect x="1743" y="170" width="5" height="6" fill="#e4e53e"/><rect x="1737" y="177" width="5" height="5" fill="#e4e53e"/><rect x="1763" y="157" width="6" height="5" fill="#e4e53e"/><rect x="1770" y="157" width="6" height="5" fill="#e4e53e"/><rect x="1763" y="164" width="5" height="6" fill="#e4e53e"/><rect x="1771" y="164" width="6" height="5" fill="#e4e53e"/><rect x="1757" y="172" width="10" height="5" fill="#e4e53e"/><rect x="1769" y="172" width="9" height="5" fill="#e4e53e"/><rect x="1779" y="157" width="5" height="5" fill="#e4e53e"/><rect x="1779" y="170" width="6" height="5" fill="#e4e53e"/><rect x="1748" y="156" width="13.5" height="13" fill="#9aa8b3"/><rect x="1750" y="158" width="4" height="9" fill="#34414d"/><rect x="1756" y="158" width="4" height="9" fill="#5a6a78"/><rect x="1696" y="181.5" width="96" height="3" fill="#d6d6d6"/><path d="M1740.7 53 V68" stroke="#444" stroke-width="1.3"/><path d="M1738 58 H1743.5" stroke="#666" stroke-width="1.1"/><path d="M1736.3 88 L1736.8 73 L1740.7 68 L1744.6 73 L1744.8 88 Z" fill="#2a2727"/><path d="M1727.8 121 L1728.5 93 L1733 88 H1748 L1750 93 L1749.8 121 Z" fill="#2b4c68"/><path d="M1731 96 h6 v7 h-6 z M1742 96 h6 v7 h-6 z M1733 108 h13 v8 h-13 z" fill="#16283a"/><path d="M1736 104 h6 v4 h-6z" fill="#7e8f7a"/><path d="M1781 80 L1777.5 96 L1775.5 110 M1781 80 L1785 96 L1788 110 M1777 97 H1786 M1776 103 H1787.5 M1777 97 L1787.5 103 M1786 97 L1776 103" stroke="#2f6aa0" stroke-width="1.9" fill="none"/><circle cx="1782" cy="78" r="2.6" fill="none" stroke="#3f78aa" stroke-width="1.4"/><path d="M1706 75 L1711 68.5 L1713 73 L1718.5 65.5 L1720.5 70 L1724.5 64" stroke="#151515" stroke-width="1.9" fill="none" stroke-linejoin="miter"/><path d="M1753 59.5 L1757.5 57.5 L1761 63 L1763 58.5 L1767.5 66 L1769.5 63 L1773.5 68" stroke="#151515" stroke-width="1.9" fill="none"/><path d="M1780 181 Q1798 174 1806 166 Q1812 160 1818 158 M1782 182 Q1800 176 1810 168 Q1816 163 1822 162 M1779 179 Q1795 170 1803 163 Q1808 158 1814 155" stroke="#5f6f58" stroke-width="2" fill="none"/><path d="M1781 183 Q1802 178 1812 170" stroke="#d0d0c8" stroke-width="1.2" fill="none"/><path d="M1812 158 L1826 148 M1815 160 L1832 154 M1817 163 L1830 162 M1809 156 L1820 144" stroke="#b8c4b0" stroke-width="0.8" fill="none"/><path d="M1684 110 L1666 188 M1697 110 L1703 188 M1668 176 L1702 176 M1671 160 L1700 160 M1675 142 L1699 142 M1680 125 L1698 125 M1684 110 L1698 125 L1675 142 L1699 142 M1675 142 L1700 160 L1671 160 L1702 176 L1668 176 L1703 188 M1697 110 L1680 125 L1699 142 M1699 142 L1671 160 M1700 160 L1668 176 M1702 176 L1666 188" stroke="#2b679c" stroke-width="3" fill="none" stroke-linejoin="round"/><path d="M1661 189 H1708" stroke="#2b679c" stroke-width="3.4"/><path d="M1677 86 Q1672 100 1681 108 Q1692 113 1699 104 Q1688 100 1677 86 Z" fill="#2b679c"/><path d="M1686 98 L1691 87" stroke="#1c2c3c" stroke-width="1.6"/><circle cx="1691.5" cy="86" r="1.8" fill="#1c2c3c"/><path d="M1664 142 Q1657 150 1663 158 L1669 151 Z" fill="#2b679c"/><path d="M1701 140 Q1709 146 1704 155 L1699 149 Z" fill="#2b679c"/></g><g font-family="Liberation Sans, sans-serif" font-weight="bold" text-anchor="end" stroke-width="0.7" stroke-linejoin="round"><text x="1882" y="57" font-size="20.5" fill="#1d4f7e" stroke="#1d4f7e" textLength="103" lengthAdjust="spacingAndGlyphs">WIRELESS</text><text x="1882" y="83" font-size="19.5" fill="#1d4f7e" stroke="#1d4f7e" textLength="77" lengthAdjust="spacingAndGlyphs">BATTLE</text><text x="1882" y="103.5" font-size="15.5" fill="#151515" stroke="#151515" textLength="56" lengthAdjust="spacingAndGlyphs">OF THE</text><text x="1882" y="128.5" font-size="20.5" fill="#151515" stroke="#151515" textLength="57" lengthAdjust="spacingAndGlyphs">MESH</text></g><rect x="1845" y="134" width="36" height="21" fill="#0a0a0a"/><text x="1863" y="152" font-family="Liberation Sans, sans-serif" font-weight="bold" font-size="19" fill="#fff" text-anchor="middle" textLength="30" lengthAdjust="spacingAndGlyphs">v17</text><g font-family="Liberation Sans, sans-serif" font-weight="bold" text-anchor="end" fill="#1a1a1a" stroke="#1a1a1a" stroke-width="0.3"><text x="1881" y="168" font-size="5.5" textLength="35" lengthAdjust="spacingAndGlyphs">12th - 15th</text><text x="1881" y="180" font-size="9.5" textLength="45" lengthAdjust="spacingAndGlyphs">June 2025</text><text x="1881" y="191" font-size="9.5" textLength="54" lengthAdjust="spacingAndGlyphs">Sundhausen</text></g></svg></div></body></html>
